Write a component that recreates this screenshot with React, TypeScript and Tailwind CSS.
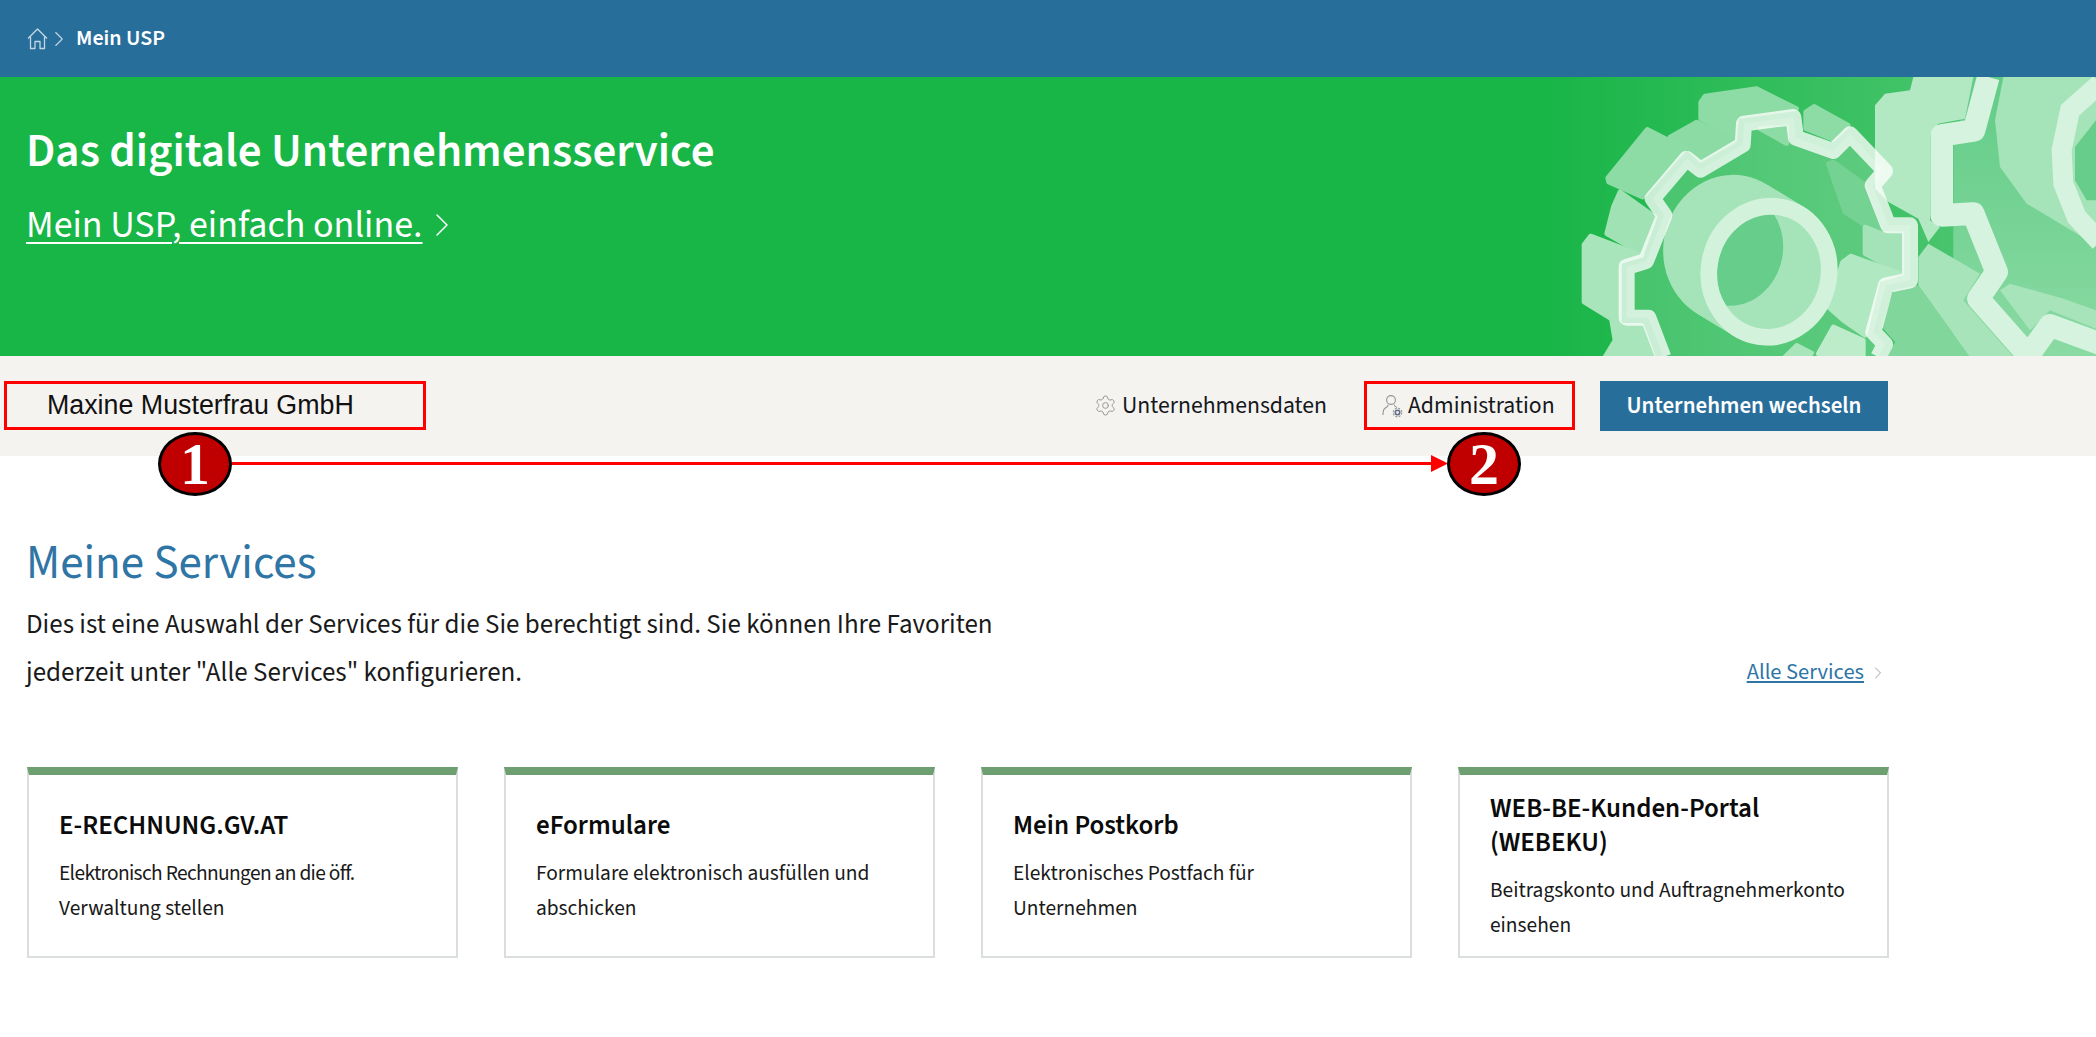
import React from 'react';
import { ChevronRight, Settings } from 'lucide-react';

const SERVICES = [
  { title: ['E-RECHNUNG.GV.AT'], text: ['Elektronisch Rechnungen an die öff.', 'Verwaltung stellen'], tight: true },
  { title: ['eFormulare'], text: ['Formulare elektronisch ausfüllen und', 'abschicken'] },
  { title: ['Mein Postkorb'], text: ['Elektronisches Postfach für', 'Unternehmen'] },
  { title: ['WEB-BE-Kunden-Portal', '(WEBEKU)'], text: ['Beitragskonto und Auftragnehmerkonto', 'einsehen'] }
];

const HUB_STEPS = [0, 1, 2, 3, 4, 5, 6, 7, 8, 9, 10, 11, 12];

// sides of the left gear's teeth: [colour, points]
const TEETH = [
  ['#8ddba5', '392,76 405,57 560,35 680,95 500,120 495,180 392,125'],
  ['#8ddba5', '707,105 732,88 835,145 790,188 707,155'],
  ['#8cdba4', '300,180 380,135 495,190 392,250 350,210'],
  ['#8ddba5', '113,303 232,157 345,215 218,360 116,315'],
  ['#a0e2b4', '110,470 130,390 150,345 255,420 215,530'],
  ['#a8e5bb', '42,503 62,477 215,535 148,555 148,740 42,675'],
  ['#a8e5bb', '125,730 148,745 215,745 250,840 105,840 135,790'],
  ['#74d292', '775,260 790,255 880,320 935,470 885,470 885,445 825,405 795,320'],
  ['#a4e3b8', '885,450 935,470 995,470 995,590 885,530'],
  ['#b0e8c1', '775,690 818,555 842,537 990,590 925,610 885,775 820,730'],
  ['#a8e5bb', '645,840 680,805 725,828 715,840'],
  ['#bcecca', '745,830 790,750 880,790 880,840 750,840'],
  ['#8ddba5', '570,155 650,150 650,200']
];

function HomeIcon() {
  return (
    <svg width="21" height="22" viewBox="0 0 21 22" fill="none" stroke="#c3d6e4" strokeWidth="1.3" strokeLinejoin="round">
      <path d="M1 10.5 10.5 1 20 10.5" />
      <path d="M3.5 8.5V20.5H8V13.5H13V20.5H17.5V8.5" />
    </svg>
  );
}

function AdminIcon() {
  return (
    <svg width="22" height="24" viewBox="0 0 22 24" fill="none" stroke="#8f9498" strokeWidth="1.1">
      <circle cx="9" cy="6" r="4.4" />
      <path d="M6 10.5C6.5 12.5 5 13 3 14.2 1.5 15.2 1 17 1 21" />
      <path d="M12 10.5C12.3 12 13.5 12.8 15 13.5" />
      <circle cx="15.5" cy="18.5" r="2.2" stroke="#5f6c85" strokeWidth="1.6" />
      <circle cx="15.5" cy="18.5" r="4.3" stroke="#8f9498" strokeDasharray="2 1.4" />
    </svg>
  );
}

// hero artwork, traced from a 3x crop starting at x=1570 (hence the 510 shift)
function Gears() {
  const faceFront = '280,840 235,722 170,722 170,570 228,552 283,415 248,365 350,245 392,278 518,203 522,140 670,120 678,182 790,222 840,172 945,282 908,325 955,445 1020,445 1020,610 948,625 910,765 945,802 925,840';
  return (
    <svg className="absolute top-0 right-0" width="696" height="279" viewBox="0 0 2088 837">
      <defs>
        <linearGradient id="heroFade" x1="0" y1="0" x2="1" y2="0">
          <stop offset="0.2" stopColor="#ffffff" stopOpacity="0" />
          <stop offset="0.7" stopColor="#ffffff" stopOpacity="0.17" />
          <stop offset="1" stopColor="#ffffff" stopOpacity="0.3" />
        </linearGradient>
        <linearGradient id="backFill" x1="0" y1="0" x2="0" y2="1">
          <stop offset="0" stopColor="#62cc87" />
          <stop offset="1" stopColor="#8adaa3" />
        </linearGradient>
        <clipPath id="hubHole">
          <ellipse cx="596" cy="585" rx="155" ry="172" transform="rotate(10 596 585)" />
        </clipPath>
      </defs>
      <rect width="2088" height="837" fill="url(#heroFade)" />
      <g transform="translate(510 0)">
        {/* right gear */}
        <polygon fill="url(#backFill)" points="1210,0 1578,0 1578,840 1150,840 1150,200" />
        <polygon fill="#b2e8c2" points="1030,0 1020,40 945,50 915,85 915,335 955,375 1045,425 1075,495 1110,450 1080,430 1080,175 1105,140 1185,125 1210,0" />
        <polygon fill="#80d69b" points="1045,625 1200,840 950,840 975,795 935,750 970,640" />
        <polygon fill="#a8e4ba" points="1075,500 1230,590 1180,670 1330,840 1200,840 1045,625 1045,540" />
        <polygon fill="#a8e4ba" points="1290,640 1380,760 1440,700 1578,755 1578,700 1480,665 1320,620" />
        <polygon fill="#a5e3b8" points="1300,0 1275,130 1290,270 1370,380 1578,505 1578,0" />
        <polyline fill="none" stroke="#d5f3de" strokeWidth="60" points="1590,20 1500,100 1475,220 1480,320 1520,420 1590,495" />
        <polygon fill="#66cd8a" points="1578,130 1515,210 1515,310 1550,370 1578,370" />
        <polyline fill="none" stroke="#d5f3de" strokeWidth="68" strokeLinejoin="round" points="1255,0 1212,160 1115,175 1115,415 1210,410 1280,585 1225,665 1375,835 1440,745 1590,800" />

        {/* left gear, teeth and sides */}
        <polygon fill="#ffffff" opacity="0.17" points={faceFront} />
        {TEETH.map(([color, points]) => (
          <polygon key={points} fill={color} stroke={color} strokeWidth="14" strokeLinejoin="round" points={points} />
        ))}

        {/* left gear, hub */}
        {HUB_STEPS.map(i => (
          <ellipse key={i} cx={484 + i * 9.4} cy={515 + i * 5.7} rx="204" ry="222" fill="#a5e3b8" transform={`rotate(10 ${484 + i * 9.4} ${515 + i * 5.7})`} />
        ))}
        <g clipPath="url(#hubHole)">
          <ellipse cx="484" cy="515" rx="155" ry="172" fill="#66cd8a" transform="rotate(10 484 515)" />
        </g>
        <ellipse cx="597" cy="584" rx="180" ry="197" fill="none" stroke="#d3f2dc" strokeWidth="50" transform="rotate(10 597 584)" />

        {/* left gear, front face */}
        <polyline fill="none" stroke="#ffffff" strokeOpacity="0.76" strokeWidth="48" strokeLinejoin="round" points={faceFront} />
      </g>
    </svg>
  );
}

function ServiceCard({ title, text, tight }: { title: string[], text: string[], tight?: boolean }) {
  return (
    <div className="flex h-[191px] flex-col justify-center border-2 border-t-8 border-[#dadfde] border-t-[#6d9f70] px-[30px] pt-[4px]">
      <h3 className="mb-[14px] text-[27px] leading-[34px] font-semibold text-[#0b0b0b]">
        {title.map(line => <div key={line}>{line}</div>)}
      </h3>
      <p className="text-[21.4px] leading-[34.5px] text-[#1a1a1a]">
        {text.map((line, i) => <span key={line} className={tight && i === 0 ? 'block tracking-[-0.65px]' : 'block'}>{line}</span>)}
      </p>
    </div>
  );
}

export default function App() {
  return (
    <div className="relative min-h-[1037px] bg-white font-['Source_Sans_3','Noto_Sans',sans-serif]">
      {/* Breadcrumb */}
      <div className="flex h-[77px] items-center bg-[#286e9b] pl-[27px] text-white">
        <HomeIcon />
        <ChevronRight size={26} strokeWidth={1} className="mr-[4px] -ml-[2px] text-[#c3d6e4]" />
        <span className="text-[22px] font-semibold">Mein USP</span>
      </div>

      {/* Hero */}
      <section className="relative h-[279px] overflow-hidden bg-[#18b547] pt-[47px] pl-[26px] text-white">
        <Gears />
        <h1 className="relative text-[47px] leading-[56px] font-semibold">Das digitale Unternehmensservice</h1>
        <div className="relative mt-[19px] flex items-center">
          <a className="text-[38px] leading-[52px] underline underline-offset-[5px] decoration-2">Mein USP, einfach online.</a>
          <ChevronRight size={40} strokeWidth={0.9} className="-ml-[1px]" />
        </div>
      </section>

      {/* Company bar */}
      <section className="relative flex h-[100px] items-start bg-[#f5f3ef] pt-[25px] pr-[208px] pl-[4px]">
        <div className="flex h-[49px] w-[422px] items-center border-[3px] border-[#ff0000] pl-[40px] font-['Liberation_Sans',sans-serif] text-[26.8px] text-[#111111]">
          Maxine Musterfrau GmbH
        </div>
        <div className="ml-auto flex h-[49px] items-center gap-[5px] text-[23.7px] text-[#14171c]">
          <Settings size={23} strokeWidth={1} className="text-[#8f9498]" />
          Unternehmensdaten
        </div>
        <div className="ml-[37px] flex h-[49px] w-[211px] items-center gap-[4px] border-[3px] border-[#ff0000] pl-[15px] text-[23.7px] text-[#14171c]">
          <AdminIcon />
          Administration
        </div>
        <button className="ml-[25px] h-[50px] w-[288px] bg-[#286e9b] text-[23px] font-semibold text-white">Unternehmen wechseln</button>

        {/* Annotation */}
        <div className="absolute top-[76px] left-[158px] flex h-[64px] w-[74px] items-center justify-center rounded-[50%] border-[3px] border-black bg-[#c00000] font-['Liberation_Serif',serif] text-[60px] leading-none font-bold text-white">1</div>
        <svg className="absolute top-[96px] left-[232px]" width="1216" height="24" viewBox="0 0 1216 24">
          <rect x="0" y="10" width="1202" height="3" fill="#ff0000" />
          <polygon points="1199,3 1216,11.5 1199,20" fill="#ff0000" />
        </svg>
        <div className="absolute top-[76px] left-[1447px] flex h-[64px] w-[74px] items-center justify-center rounded-[50%] border-[3px] border-black bg-[#c00000] font-['Liberation_Serif',serif] text-[60px] leading-none font-bold text-white">2</div>
      </section>

      {/* Services */}
      <main className="pr-[207px] pl-[27px]">
        <h2 className="mt-[79px] -ml-[1px] text-[47px] leading-[58px] text-[#2f75a5]">Meine Services</h2>
        <div className="flex items-end justify-between">
          <p className="mt-[8px] -ml-[1px] text-[27px] leading-[47.5px] text-[#1a1a1a]">
            <span className="block">Dies ist eine Auswahl der Services für die Sie berechtigt sind. Sie können Ihre Favoriten</span>
            <span className="block">jederzeit unter "Alle Services" konfigurieren.</span>
          </p>
          <div className="flex items-center pr-[1px] pb-[6px]">
            <a className="text-[22.5px] text-[#2f75a5] underline underline-offset-2">Alle Services</a>
            <ChevronRight size={20} strokeWidth={1.2} className="ml-[4px] text-[#9aa0a5]" />
          </div>
        </div>
        <div className="mt-[71px] grid grid-cols-4 gap-[46px]">
          {SERVICES.map(s => <ServiceCard key={s.title[0]} title={s.title} text={s.text} tight={s.tight} />)}
        </div>
      </main>
    </div>
  );
}
